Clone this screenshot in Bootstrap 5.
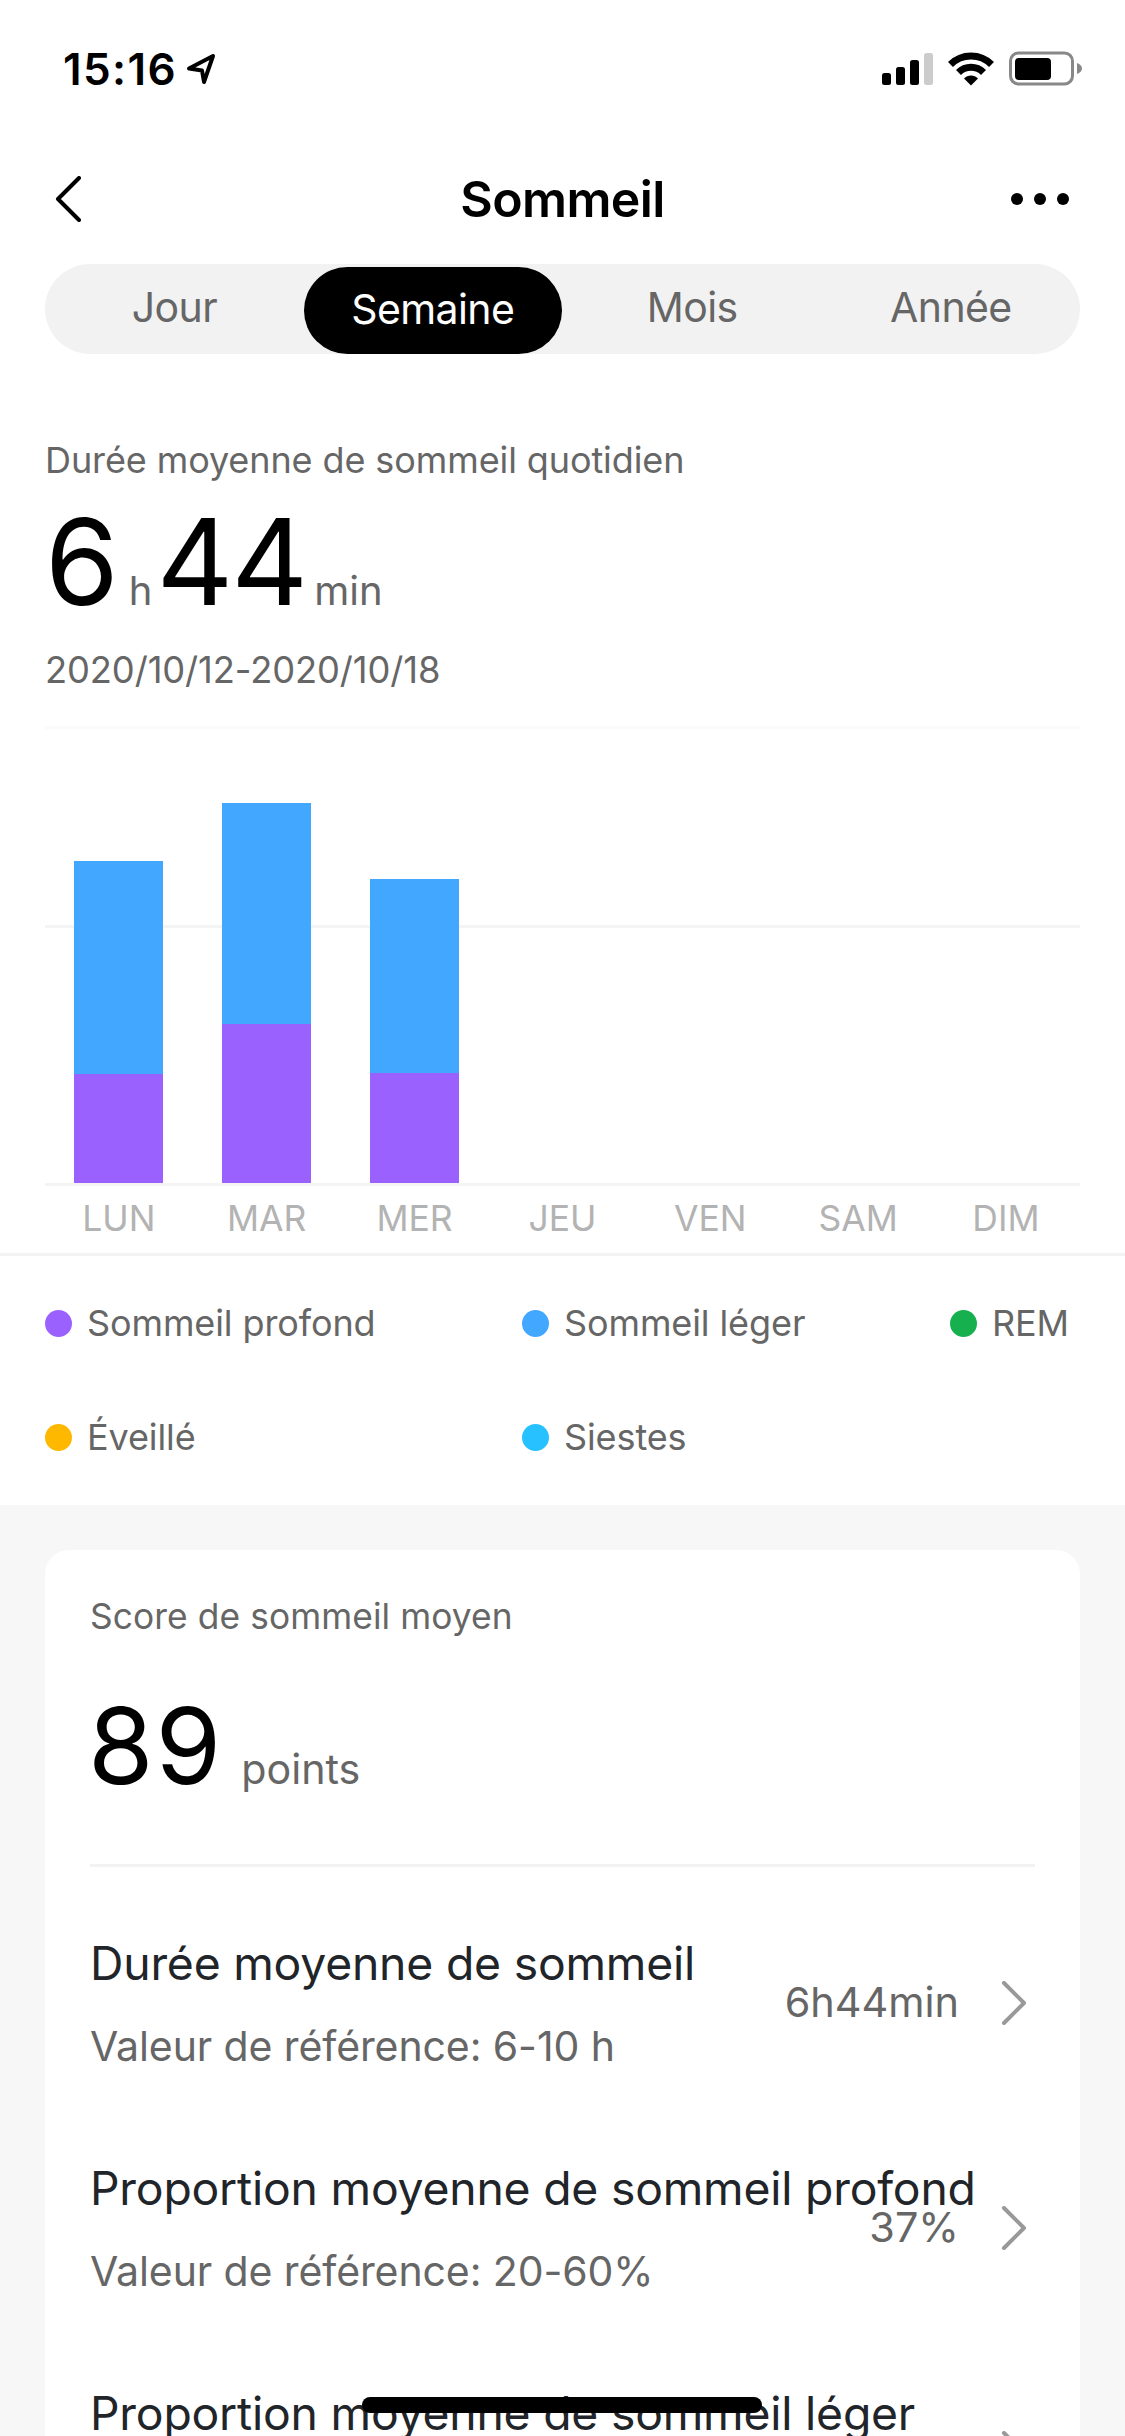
<!DOCTYPE html>
<html lang="fr">
<head>
<meta charset="utf-8">
<title>Sommeil</title>
<link href="https://cdn.jsdelivr.net/npm/bootstrap@5.3.0/dist/css/bootstrap.min.css" rel="stylesheet">
<style>
html,body{margin:0;height:2436px;overflow:hidden;background:#fff}
body{font-family:Inter,"Liberation Sans",sans-serif;color:#000;position:relative}
.sb{height:130px;padding:0 43px 0 63px;align-items:flex-start}
.sb-time{font-size:44px;font-weight:600;line-height:44px;margin-top:47px;letter-spacing:1.4px}
.sb-svg{display:block}
.sb-arrow{margin-top:52px;margin-left:8px}
.sb-icons{margin-top:50px}
.topnav{height:134px;padding:3px 55px 0}
.topside{flex:0 0 60px;display:flex}
.topside-r{justify-content:flex-end}
.topnav-title{font-size:50px;font-weight:600;letter-spacing:-.6px;line-height:60px}
.seg{margin:0 45px;height:90px;background:#f2f2f2;border-radius:45px}
.seg-it{flex:0 0 25%;font-size:41px;color:#666;line-height:87px;text-align:center;letter-spacing:-.6px}
.seg-it.on{flex:0 0 258px;margin:3px 1px 0 0;background:#000;color:#fff;border-radius:44px;height:87px;line-height:84px}
.head{padding:84px 45px 0}
.lab{font-size:36px;line-height:44px;color:#666;letter-spacing:-.1px}
.bigrow{margin-top:21px;height:119px;line-height:119px;white-space:nowrap;display:flex;align-items:baseline}
.num{font-size:119px;font-weight:400;letter-spacing:-2px}
.unit{font-size:40px;color:#666;margin:0 4px 0 12px}
.unit-min{margin-left:8px}
.datel{margin-top:26px;font-size:36.300px;line-height:44px;color:#666;letter-spacing:-.1px}
.rule1{height:3px;background:#fafafa;margin:34px 45px 0}
.plot{height:457px;margin:0 45px;border-bottom:3px solid #f4f4f4;background:linear-gradient(#f4f4f4,#f4f4f4) 0 196px/100% 3px no-repeat}
.pc{width:calc(100%/7);display:flex;flex-direction:column;justify-content:flex-end;align-items:center}
.bar-a{width:89px;background:#42a7ff}
.bar-b{width:89px;background:#9a61ff}
.xax{margin:0 45px;height:67px}
.xax span{width:calc(100%/7);text-align:center;font-size:35.500px;color:#b3b3b3;line-height:66px}
.xline{height:3px;background:#f3f3f3}
.legend{display:grid;grid-template-columns:477px 428px 1fr;padding:10px 0 0 45px;height:249px;grid-auto-rows:114px}
.lg{display:flex;align-items:center;font-size:36px;color:#666;gap:15px;letter-spacing:-.1px}
.dot{width:27px;height:27px;border-radius:50%;flex:none}
.graybg{background:#f7f7f7;padding:45px 45px 0;height:934px}
.panel{border-radius:24px;padding:45px 45px 0;height:1200px}
.plab{font-size:35.300px;line-height:44px;color:#666;letter-spacing:.1px}
.scorerow{margin-top:54px;line-height:105px;height:105px;display:flex;align-items:baseline}
.score{font-size:106px;letter-spacing:2px;margin-left:-2px}
.pts{font-size:41.200px;color:#666;margin-left:18px}
.rule2{height:3px;background:#f2f2f2;margin-top:66px;margin-bottom:24px}
.rowit{height:225px;padding:0;background:transparent;border:0}
.rowl{flex:0 0 640px;min-width:0;white-space:nowrap;align-self:flex-start;padding-top:42px}
.rowt{font-size:46.300px;line-height:60px;letter-spacing:-.2px}
.rows{font-size:41px;line-height:60px;height:60px;color:#666;margin-top:23px;letter-spacing:-.1px}
.rowv{font-size:41.400px;color:#666;margin-left:auto;margin-top:-3px}
.chev{margin:-2px 9px 0 42px;flex:none}
.homebar{position:absolute;left:362px;top:2397px;width:400px;height:16px;background:#000;border-radius:8px}
</style>
</head>
<body>
<div class="d-flex justify-content-between sb">
  <div class="d-flex align-items-start">
    <span class="sb-time">15:16</span>
    <svg class="sb-svg sb-arrow" width="32" height="34" viewBox="186 52 32 34"><path d="M214 56 190 68.500 203 70.500 205 82Z" fill="none" stroke="#000" stroke-width="4" stroke-linejoin="round"/></svg>
  </div>
  <svg class="sb-svg sb-icons" width="202" height="38" viewBox="880 50 202 38">
    <rect x="882" y="73" width="9" height="12" rx="2.500"/><rect x="896" y="67" width="9" height="18" rx="2.500"/><rect x="910" y="60" width="9" height="25" rx="2.500"/><rect x="924" y="53" width="9" height="32" rx="2.500" fill="#ccc"/>
    <path d="M950.500 64.500a29 29 0 0 1 41 0" fill="none" stroke="#000" stroke-width="7"/>
    <path d="M958.500 72.500a17.600 17.600 0 0 1 25 0" fill="none" stroke="#000" stroke-width="7"/>
    <path d="M964 78.500a9.500 9.500 0 0 1 14 0L971 85.500Z"/>
    <rect x="1010.500" y="53" width="62" height="31" rx="8" fill="none" stroke="#888" stroke-width="3"/>
    <rect x="1015" y="58" width="36" height="22" rx="4"/>
    <path d="M1077 63c3 1 5 3 5 5.500s-2 4.500-5 5.500Z" fill="#888"/>
  </svg>
</div>
<nav class="d-flex justify-content-between align-items-center topnav">
  <span class="topside"><svg width="26" height="46" viewBox="0 0 26 46"><path d="M24 2 3 23l21 21" fill="none" stroke="#000" stroke-width="4" stroke-linecap="round" stroke-linejoin="round"/></svg></span>
  <span class="topnav-title">Sommeil</span>
  <span class="topside topside-r"><svg width="60" height="14" viewBox="0 0 60 14"><circle cx="7" cy="7" r="6"/><circle cx="30" cy="7" r="6"/><circle cx="53" cy="7" r="6"/></svg></span>
</nav>
<div class="d-flex seg">
  <span class="seg-it">Jour</span>
  <span class="seg-it on">Semaine</span>
  <span class="seg-it">Mois</span>
  <span class="seg-it">Année</span>
</div>
<section class="head">
  <div class="lab">Durée moyenne de sommeil quotidien</div>
  <div class="bigrow"><span class="num">6</span><span class="unit">h</span><span class="num">44</span><span class="unit unit-min">min</span></div>
  <div class="datel">2020/10/12-2020/10/18</div>
</section>
<div class="rule1"></div>
<div class="d-flex plot">
  <div class="pc"><div class="bar-a" style="height:213px"></div><div class="bar-b" style="height:109px"></div></div>
  <div class="pc"><div class="bar-a" style="height:221px"></div><div class="bar-b" style="height:159px"></div></div>
  <div class="pc"><div class="bar-a" style="height:194px"></div><div class="bar-b" style="height:110px"></div></div>
  <div class="pc"></div><div class="pc"></div><div class="pc"></div><div class="pc"></div>
</div>
<div class="d-flex xax"><span>LUN</span><span>MAR</span><span>MER</span><span>JEU</span><span>VEN</span><span>SAM</span><span>DIM</span></div>
<div class="xline"></div>
<div class="legend">
  <div class="lg"><i class="dot" style="background:#9a61ff"></i>Sommeil profond</div>
  <div class="lg"><i class="dot" style="background:#42a7ff"></i>Sommeil léger</div>
  <div class="lg"><i class="dot" style="background:#17b04f"></i>REM</div>
  <div class="lg"><i class="dot" style="background:#ffb800"></i>Éveillé</div>
  <div class="lg"><i class="dot" style="background:#27c1ff"></i>Siestes</div>
</div>
<div class="graybg">
  <div class="card border-0 panel">
    <div class="plab">Score de sommeil moyen</div>
    <div class="scorerow"><span class="score">89</span><span class="pts">points</span></div>
    <div class="rule2"></div>
    <div class="list-group list-group-flush">
      <div class="list-group-item d-flex align-items-center rowit">
        <div class="rowl"><div class="rowt">Durée moyenne de sommeil</div><div class="rows">Valeur de référence: 6-10 h</div></div>
        <span class="rowv">6h44min</span>
        <svg class="chev" width="25" height="44" viewBox="0 0 25 44"><path d="M3 2l20 20L3 42" fill="none" stroke="#999" stroke-width="4" stroke-linecap="round" stroke-linejoin="round"/></svg>
      </div>
      <div class="list-group-item d-flex align-items-center rowit">
        <div class="rowl"><div class="rowt">Proportion moyenne de sommeil profond</div><div class="rows">Valeur de référence: 20-60%</div></div>
        <span class="rowv">37%</span>
        <svg class="chev" width="25" height="44" viewBox="0 0 25 44"><path d="M3 2l20 20L3 42" fill="none" stroke="#999" stroke-width="4" stroke-linecap="round" stroke-linejoin="round"/></svg>
      </div>
      <div class="list-group-item d-flex align-items-center rowit">
        <div class="rowl"><div class="rowt">Proportion moyenne de sommeil léger</div></div>
        <svg class="chev ms-auto" width="25" height="44" viewBox="0 0 25 44"><path d="M3 2l20 20L3 42" fill="none" stroke="#999" stroke-width="4" stroke-linecap="round" stroke-linejoin="round"/></svg>
      </div>
    </div>
  </div>
</div>
<div class="homebar"></div>
<script src="https://cdn.jsdelivr.net/npm/bootstrap@5.3.0/dist/js/bootstrap.bundle.min.js"></script>
</body>
</html>
